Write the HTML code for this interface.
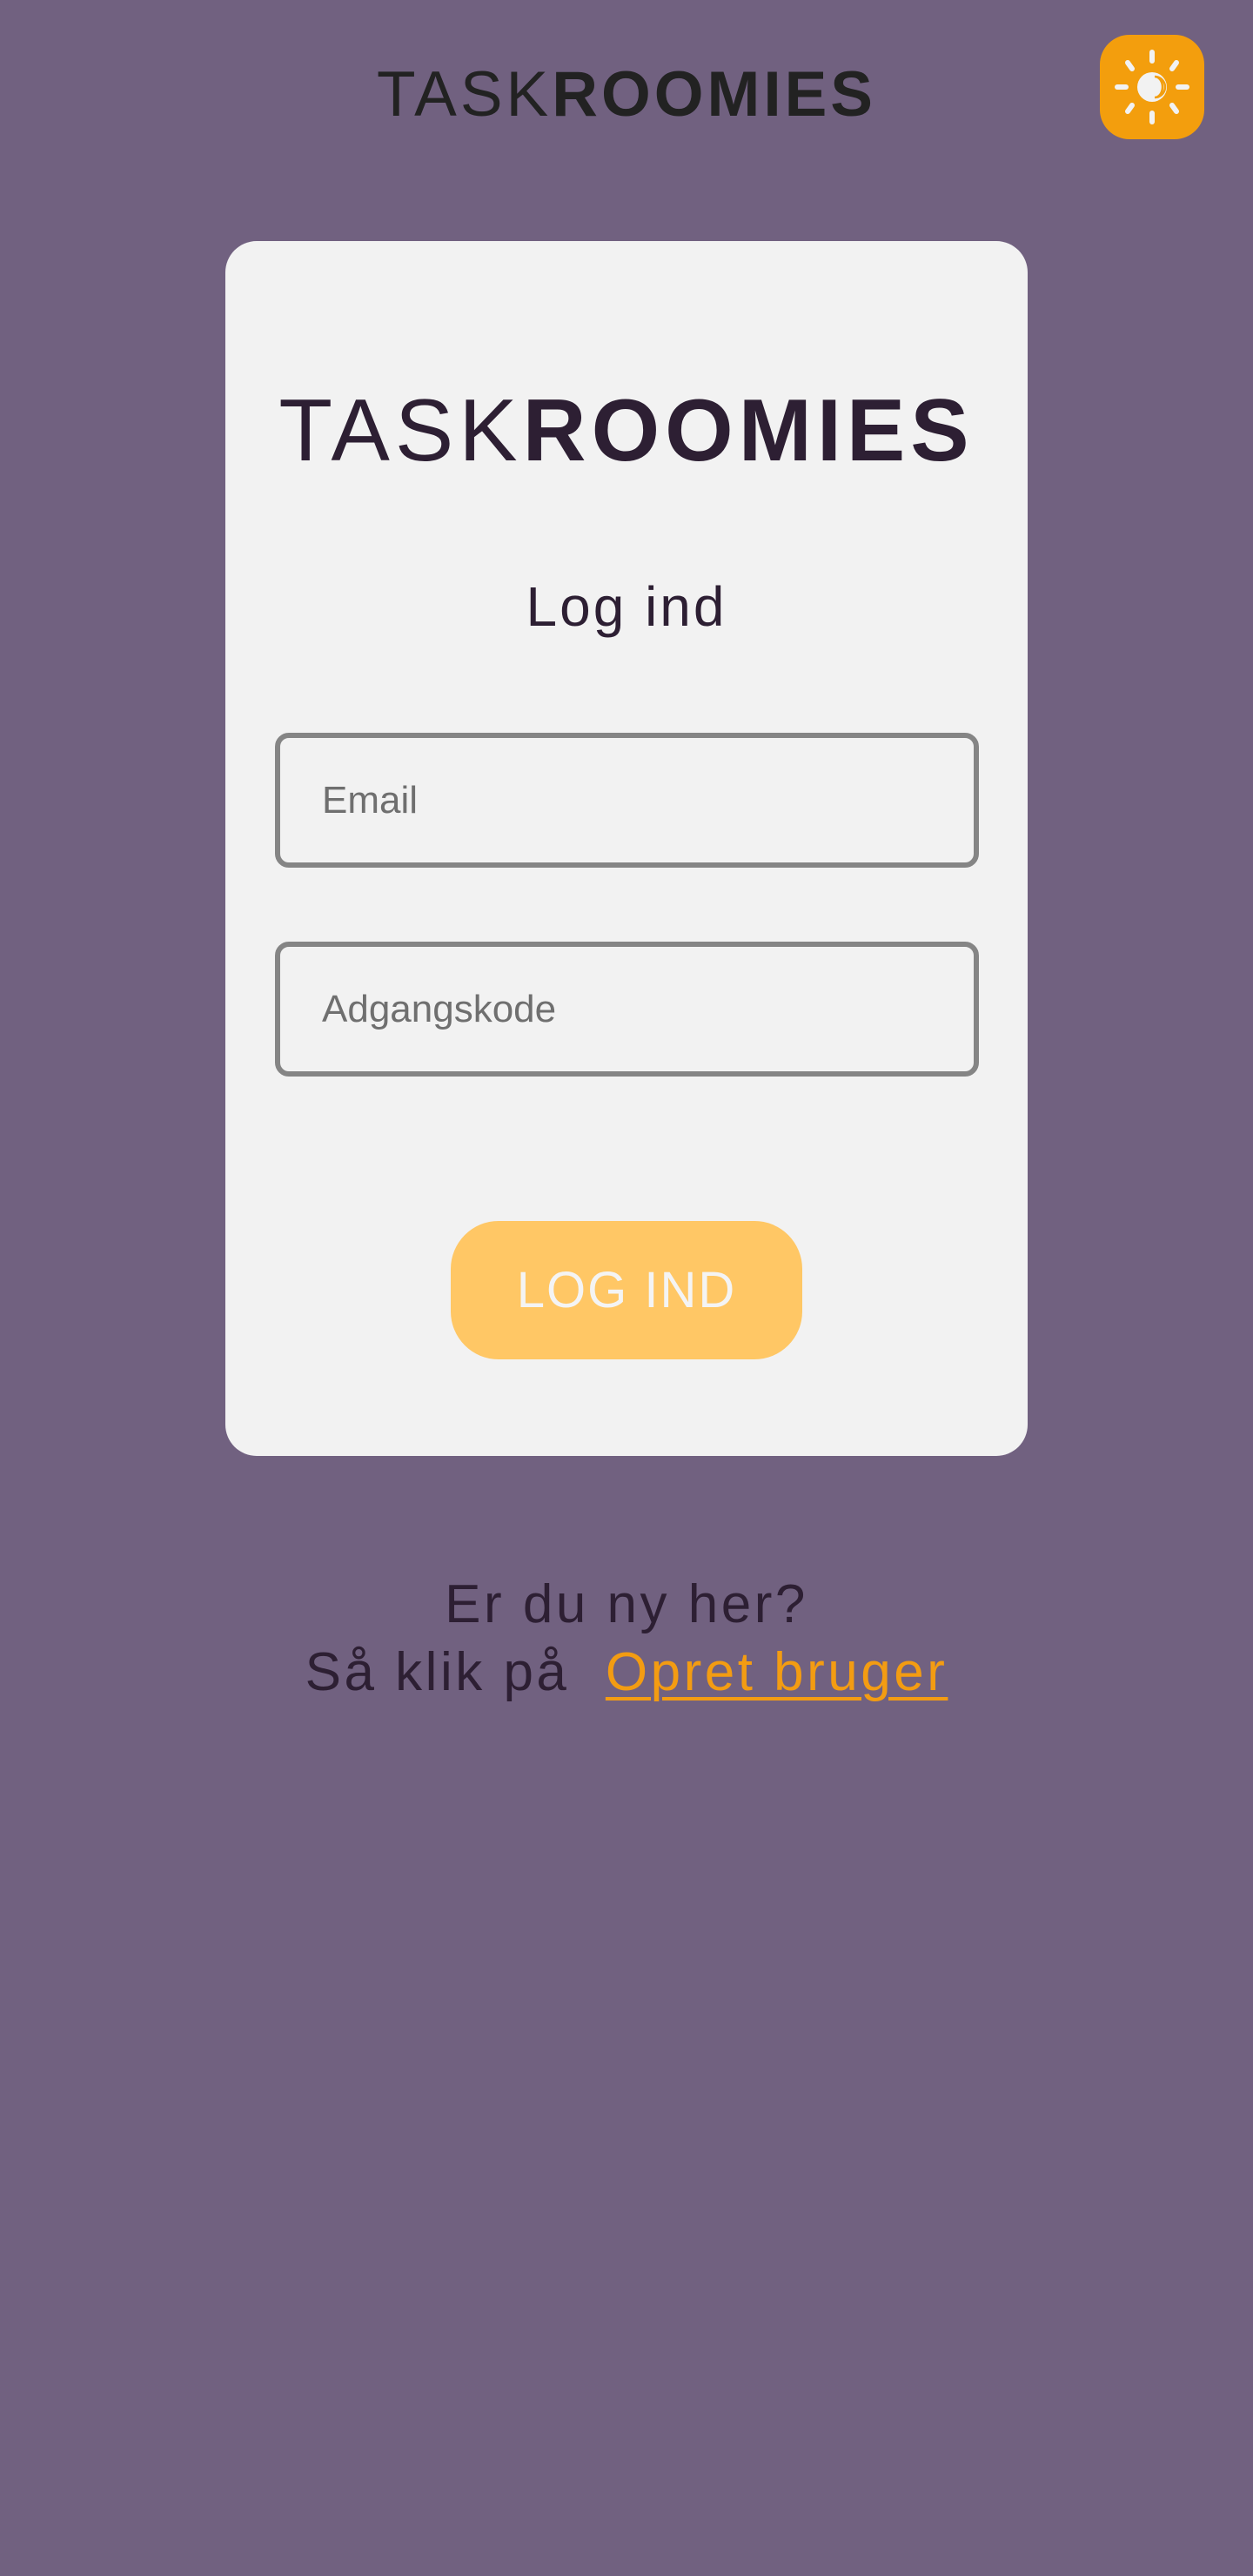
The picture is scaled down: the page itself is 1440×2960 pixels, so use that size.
<!DOCTYPE html>
<html><head><meta charset="utf-8"><style>
html,body{margin:0;padding:0}
body{width:1440px;height:2960px;background:#716180;position:relative;overflow:hidden;font-family:"Liberation Sans",sans-serif}
.logo{position:absolute;left:0;width:1440px;text-align:center;white-space:nowrap;line-height:1}
.logo b{font-weight:700}
.toggle{position:absolute;left:1264px;top:40px;width:120px;height:120px;border-radius:34px;background:#f39e0d}
.card{position:absolute;left:259px;top:277px;width:922px;height:1396px;background:#f2f2f2;border-radius:36px}
.inp{position:absolute;left:316px;width:797px;height:143px;border:6px solid #858585;border-radius:16px;box-sizing:content-box}
.inp span{position:absolute;left:48px;top:50%;transform:translateY(-50%);font-size:44px;color:#6f6f6f}
.btn{position:absolute;left:518px;top:1403px;width:404px;height:159px;border-radius:55px;background:#ffc765;color:#f4f4f4;font-size:58px;text-align:center;line-height:159px;letter-spacing:2px}
.t{position:absolute;left:0;width:1440px;text-align:center;color:#2d1f33;font-size:62px;white-space:nowrap}
.t a{color:#f39c12;text-decoration:underline;text-decoration-thickness:4px;text-underline-offset:8px}
</style></head><body>
<div class="logo" style="top:72px;font-size:73px;letter-spacing:4px;color:#222">TASK<b>ROOMIES</b></div>
<div class="toggle"><svg width="120" height="120" viewBox="0 0 120 120">
<g stroke="#f2f2f2" stroke-width="6" stroke-linecap="round">
<line x1="60" y1="20" x2="60" y2="30"/><line x1="60" y1="90" x2="60" y2="100"/>
<line x1="20" y1="60" x2="30" y2="60"/><line x1="90" y1="60" x2="100" y2="60"/>
<line x1="32" y1="32" x2="37" y2="39"/><line x1="88" y1="32" x2="83" y2="39"/>
<line x1="32" y1="88" x2="37" y2="81"/><line x1="88" y1="88" x2="83" y2="81"/>
</g>
<circle cx="60" cy="60" r="17" fill="#f2f2f2"/>
<path d="M63 48 A12 12 0 0 1 63 72 A9 12 0 0 0 63 48Z" fill="none" stroke="#f39e0d" stroke-width="2.5"/>
</svg></div>
<div class="card"></div>
<div class="logo" style="top:445px;font-size:101px;letter-spacing:6px;color:#2d1f33">TASK<b>ROOMIES</b></div>
<div class="t" style="top:660px;font-size:64px;letter-spacing:3px">Log ind</div>
<div class="inp" style="top:842px"><span>Email</span></div>
<div class="inp" style="top:1082px"><span>Adgangskode</span></div>
<div class="btn">LOG IND</div>
<div class="t" style="top:1805px;line-height:78px;letter-spacing:3.5px">Er du ny her?<br>Så klik på &nbsp;<a>Opret bruger</a></div>
</body></html>
